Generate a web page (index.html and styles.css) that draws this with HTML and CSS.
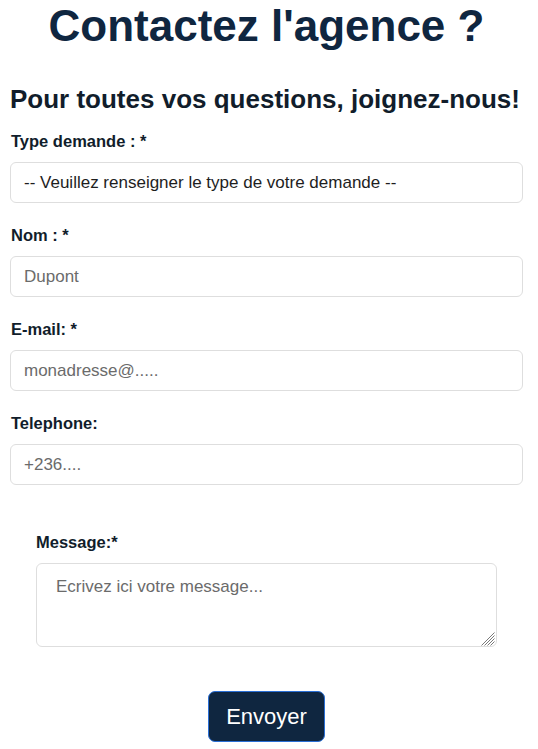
FILE: index.html
```html
<!DOCTYPE html>
<html lang="fr">
<head>
<meta charset="utf-8">
<title>Contactez l'agence</title>
<link rel="stylesheet" href="styles.css">
</head>
<body>
<main class="page">
  <h1 class="title">Contactez l'agence ?</h1>
  <h2 class="subtitle">Pour toutes vos questions, joignez-nous!</h2>
  <form class="form">
    <div class="field">
      <label class="label" for="type">Type demande : *</label>
      <div class="control select" id="type">-- Veuillez renseigner le type de votre demande --</div>
    </div>
    <div class="field">
      <label class="label" for="nom">Nom : *</label>
      <input class="control" id="nom" type="text" placeholder="Dupont">
    </div>
    <div class="field">
      <label class="label" for="email">E-mail: *</label>
      <input class="control" id="email" type="text" placeholder="monadresse@.....">
    </div>
    <div class="field">
      <label class="label" for="tel">Telephone:</label>
      <input class="control" id="tel" type="text" placeholder="+236....">
    </div>
    <div class="field message">
      <label class="label" for="msg">Message:*</label>
      <div class="area-wrap">
        <textarea class="area" id="msg" placeholder="Ecrivez ici votre message..."></textarea>
        <svg class="grip" width="15" height="15" viewBox="0 0 15 15" aria-hidden="true">
          <path d="M14.5 1.5 L1.5 14.5 M14.5 4.5 L4.5 14.5 M14.5 7.5 L7.5 14.5 M14.5 10.5 L10.5 14.5" stroke="#7a7a7a" stroke-width="1" fill="none"/>
        </svg>
      </div>
    </div>
    <div class="actions">
      <button class="send" type="button">Envoyer</button>
    </div>
  </form>
</main>
</body>
</html>
```

FILE: styles.css
```css
* { box-sizing: border-box; }
html, body { margin: 0; padding: 0; background: #fff; }
body {
  font-family: "Liberation Sans", Arial, sans-serif;
  color: #0f2640;
}
.page {
  width: 538px;
  padding: 0 15px 0 10px;
}
.title {
  margin: 0;
  font-size: 44px;
  line-height: 51px;
  font-weight: bold;
  text-align: center;
  color: #0f2640;
}
.subtitle {
  margin: 33px 0 0 0;
  font-size: 26px;
  line-height: 30px;
  font-weight: bold;
  color: #111d2b;
}
.form { display: flex; flex-direction: column; }
.field { display: flex; flex-direction: column; }
.label {
  font-size: 16.5px;
  line-height: 18px;
  font-weight: bold;
  color: #111d2b;
  padding-left: 1px;
  margin-top: 18px;
  margin-bottom: 12px;
}
.field + .field .label { margin-top: 23px; }
.control {
  display: block;
  width: 513px;
  height: 41px;
  border: 1px solid #dedede;
  border-radius: 6px;
  padding: 0 13px;
  font-family: "Liberation Sans", Arial, sans-serif;
  font-size: 17px;
  color: #222;
  background: #fff;
  outline: none;
}
.select { display: flex; align-items: center; color: #1e1e1e; }
.control::placeholder { color: #6b6b6b; }
.field.message { padding-left: 26px; }
.field.message .label { margin-top: 48px; padding-left: 0; }
.area-wrap {
  position: relative;
  width: 461px;
  height: 84px;
}
.area {
  display: block;
  width: 461px;
  height: 84px;
  border: 1px solid #dedede;
  border-radius: 6px;
  padding: 13px 19px;
  font-family: "Liberation Sans", Arial, sans-serif;
  font-size: 17px;
  color: #222;
  outline: none;
  resize: none;
}
.area::placeholder { color: #6b6b6b; }
.grip {
  position: absolute;
  right: 2px;
  bottom: 1px;
  pointer-events: none;
}
.actions {
  display: flex;
  justify-content: center;
  padding-top: 44px;
}
.send {
  width: 117px;
  height: 51px;
  background: #0f2640;
  color: #fff;
  border: 1px solid #2a6fd6;
  border-radius: 7px;
  font-family: "Liberation Sans", Arial, sans-serif;
  font-size: 22px;
}
```
